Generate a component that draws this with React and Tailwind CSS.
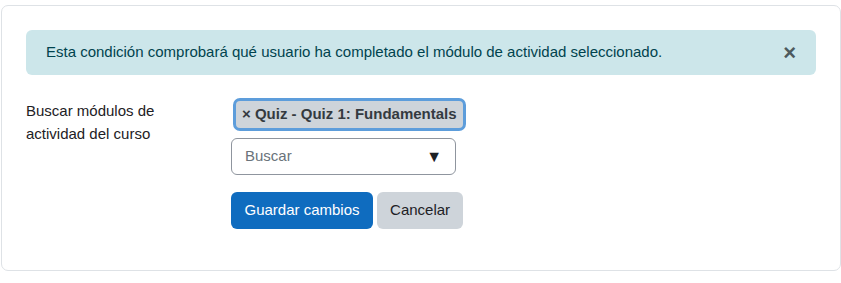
export default function App() {
  return (
    <div
      className="bg-white pt-[5px] pl-[1px] h-[283px]"
      style={{ fontFamily: '"Liberation Sans", Arial, sans-serif' }}
    >
      <div className="border border-[#dee2e6] rounded-[7px] px-6 pt-6 pb-10 h-[266px]">
        {/* Info alert */}
        <div className="flex items-center justify-between bg-[#cce6ea] text-[#00434e] rounded-[6px] pl-5 pr-5 h-[45px] text-[15px]">
          <span>Esta condición comprobará qué usuario ha completado el módulo de actividad seleccionado.</span>
          <button className="text-[#4d5a5e] text-[22px] leading-none font-bold">×</button>
        </div>

        {/* Form row */}
        <div className="flex mt-[23px]">
          <div className="w-[205px] text-[15px] leading-[23px] text-[#1d2125] pt-[1px]">
            Buscar módulos de
            <br />
            actividad del curso
          </div>
          <div className="flex flex-col items-start">
            <span className="ml-[2px] inline-flex items-center h-[33px] px-[6px] rounded-[7px] bg-[#ced4da] border-[3px] border-[#5d9ddb] text-[15px] font-bold text-[#343a40]">
              × Quiz - Quiz 1: Fundamentals
            </span>
            <div className="mt-[7px] w-[225px] h-[37px] border border-[#8f959e] rounded-[6px] flex items-center justify-between pl-[13px] pr-[13px] text-[15px]">
              <span className="text-[#6a737b]">Buscar</span>
              <span className="text-[#1d2125] text-[16px]">▼</span>
            </div>
            <div className="flex gap-[4px] mt-[17px]">
              <button className="h-[37px] px-[13.5px] rounded-[6px] bg-[#0f6cbf] text-white text-[15px]">
                Guardar cambios
              </button>
              <button className="h-[37px] px-[13px] rounded-[6px] bg-[#ced4da] text-[#1d2125] text-[15px]">
                Cancelar
              </button>
            </div>
          </div>
        </div>
      </div>
    </div>
  );
}
